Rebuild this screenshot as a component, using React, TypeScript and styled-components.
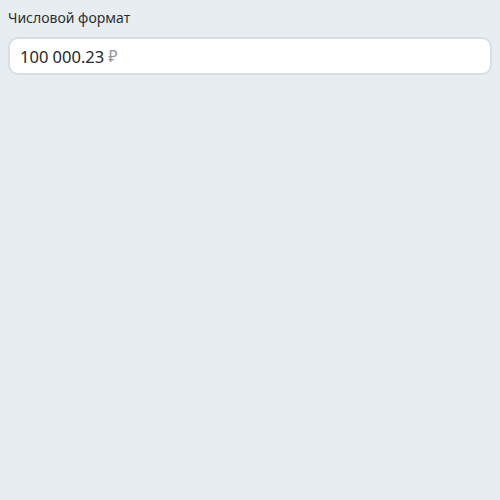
import * as React from 'react'
import styled, { createGlobalStyle } from 'styled-components'

const GlobalStyle = createGlobalStyle`
  html, body {
    margin: 0;
    padding: 0;
    background: #e8edf1;
  }
  body {
    font-family: 'Noto Sans', 'DejaVu Sans', sans-serif;
  }
`

const Page = styled.div`
  padding: 8px 8px;
  display: flex;
  flex-direction: column;
  gap: 9px;
`

const Label = styled.label`
  font-size: 14px;
  line-height: 20px;
  color: #2b2f33;
`

const Field = styled.div`
  display: flex;
  align-items: center;
  gap: 4px;
  height: 34px;
  padding: 0 10px;
  background: #fff;
  border: 2px solid #d6dfe7;
  border-radius: 10px;
`

const Value = styled.span`
  font-size: 16.5px;
  color: #24282c;
`

const Currency = styled.span`
  font-size: 16px;
  color: #8e979f;
`

export default function App () {
  return (
    <>
      <GlobalStyle />
      <Page>
        <Label>Числовой формат</Label>
        <Field>
          <Value>100 000.23</Value>
          <Currency>₽</Currency>
        </Field>
      </Page>
    </>
  )
}
